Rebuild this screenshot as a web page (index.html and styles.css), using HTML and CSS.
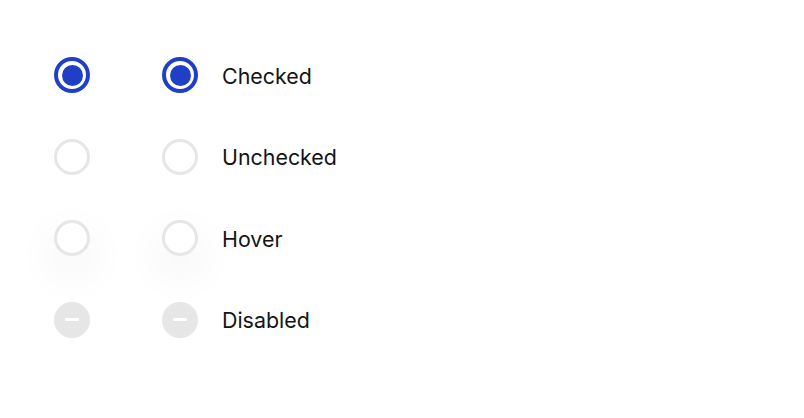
FILE: index.html
```html
<!DOCTYPE html>
<html>
<head>
<meta charset="utf-8">
<link rel="stylesheet" href="styles.css">
</head>
<body>
<div class="grid">
  <span class="radio checked"></span>
  <span class="radio checked"></span>
  <span class="label">Checked</span>

  <span class="radio"></span>
  <span class="radio"></span>
  <span class="label">Unchecked</span>

  <span class="radio hover"></span>
  <span class="radio hover"></span>
  <span class="label">Hover</span>

  <span class="radio disabled"></span>
  <span class="radio disabled"></span>
  <span class="label">Disabled</span>
</div>
</body>
</html>
```
FILE: styles.css
```css
html, body {
  margin: 0;
  background: #ffffff;
}
body {
  font-family: Inter, "Noto Sans", sans-serif;
  color: #141414;
}
.grid {
  display: grid;
  grid-template-columns: 108px 60px auto;
  grid-auto-rows: 36px;
  row-gap: 45.67px;
  align-items: center;
  padding: 57px 0 0 54px;
}
.radio {
  box-sizing: border-box;
  width: 36px;
  height: 36px;
  border-radius: 50%;
  border: 3px solid #e6e6e6;
  background: #fff;
  position: relative;
  display: block;
}
.radio.checked {
  border: 4px solid #1f3fc6;
}
.radio.checked::after {
  content: "";
  position: absolute;
  left: 3.5px;
  top: 3.5px;
  width: 21px;
  height: 21px;
  border-radius: 50%;
  background: #1f3fc6;
}
.radio.hover {
  box-shadow: 0 16px 36px 12px rgba(0, 0, 0, 0.028);
}
.radio.disabled {
  border: none;
  background: #e6e6e6;
}
.radio.disabled::after {
  content: "";
  position: absolute;
  left: 11px;
  top: 16.5px;
  width: 14px;
  height: 3px;
  border-radius: 2px;
  background: #fff;
}
.label {
  font-size: 21.4px;
  line-height: 36px;
  padding-top: 1px;
}
```
